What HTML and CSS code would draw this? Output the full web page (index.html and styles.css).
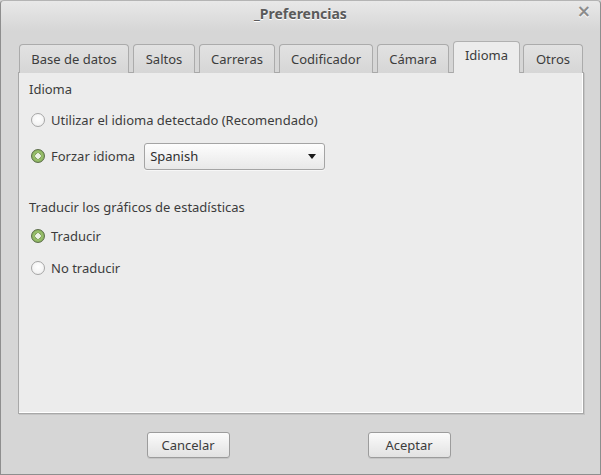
FILE: index.html
```html
<!DOCTYPE html>
<html>
<head>
<meta charset="utf-8">
<link rel="stylesheet" href="styles.css">
</head>
<body>
<div class="window">
  <div class="titlebar">
    <span class="title">_Preferencias</span>
    <span class="close">&#x00D7;</span>
  </div>
  <div class="body">
    <div class="tabs">
      <div class="tab t-base">Base de datos</div>
      <div class="tab t-saltos">Saltos</div>
      <div class="tab t-carreras">Carreras</div>
      <div class="tab t-cod">Codificador</div>
      <div class="tab t-cam">Cámara</div>
      <div class="tab t-idioma active">Idioma</div>
      <div class="tab t-otros">Otros</div>
    </div>
    <div class="panel">
      <div class="section-label">Idioma</div>
      <div class="row r1"><span class="radio"></span><span>Utilizar el idioma detectado (Recomendado)</span></div>
      <div class="row r2"><span class="radio checked"></span><span>Forzar idioma</span>
        <div class="combo"><span>Spanish</span><span class="arrow"></span></div>
      </div>
      <div class="section-label s2">Traducir los gráficos de estadísticas</div>
      <div class="row r3"><span class="radio checked"></span><span>Traducir</span></div>
      <div class="row r4"><span class="radio"></span><span>No traducir</span></div>
    </div>
    <div class="buttons">
      <div class="button">Cancelar</div>
      <div class="button">Aceptar</div>
    </div>
  </div>
</div>
</body>
</html>
```
FILE: styles.css
```css
* { box-sizing: border-box; }
html, body { margin: 0; padding: 0; }
body {
  width: 601px; height: 475px; overflow: hidden;
  font-family: "Noto Sans", "DejaVu Sans", sans-serif;
  font-size: 13px;
  color: #3c3c3c;
  background: #d6d6d6;
}
.window {
  width: 601px; height: 475px;
  border: 1px solid #8e8e8e;
  border-top-color: #b4b4b4;
  border-radius: 4px 4px 0 0;
  background: #d6d6d6;
  display: flex; flex-direction: column;
}
.titlebar {
  height: 30px; flex: none;
  position: relative;
  display: flex; align-items: center; justify-content: center;
  background: linear-gradient(#e8e8e8, #d6d6d6);
  border-radius: 4px 4px 0 0;
}
.title {
  font-weight: bold; font-size: 14px; color: #5a5a5a;
  text-shadow: 0 1px 0 #ffffff;
  margin-top: -6px;
}
.close {
  position: absolute; right: 9px; top: 0px;
  font-family: "DejaVu Sans", sans-serif;
  font-size: 17px; font-weight: bold; color: #8c8c8c;
  text-shadow: 0 1px 0 #fff;
}
.body {
  flex: 1; display: flex; flex-direction: column;
  padding: 10px 16px 0 17px;
}
.tabs {
  display: flex; align-items: flex-end; gap: 4px;
  height: 32px; padding-left: 1px;
  position: relative; z-index: 1; margin-bottom: -1px;
}
.tab {
  flex: none; white-space: nowrap;
  height: 29px;
  display: flex; align-items: center; justify-content: center;
  background: linear-gradient(#e2e2e2, #d6d6d6);
  border: 1px solid #ababab;
  border-bottom: none;
  border-radius: 4px 4px 0 0;
  color: #3c3c3c;
}
.t-base { width: 110px; }
.t-saltos { width: 62px; }
.t-carreras { width: 76px; }
.t-cod { width: 94px; }
.t-cam { width: 72px; }
.t-idioma { width: 67px; }
.t-otros { width: 60px; margin-left: -1px; }
.tab.active {
  height: 32px;
  background: #ececec;
  border-color: #b0b0b0;
  padding-bottom: 5px;
}
.panel {
  height: 342px;
  background: #ececec;
  border: 1px solid #a8a8a8;
  box-shadow: inset -1px -1px 0 #ffffff, 1px 1px 0 #c4c4c4;
  padding: 7px 10px;
  display: flex; flex-direction: column;
}
.section-label { height: 18px; line-height: 18px; }
.section-label.s2 { margin-top: 29px; }
.row {
  display: flex; align-items: center; height: 26px; padding-left: 2px;
}
.r1 { margin-top: 9px; }
.r2 { margin-top: 10px; }
.r3 { margin-top: 7px; }
.r4 { margin-top: 6px; }
.radio {
  width: 14px; height: 14px; border-radius: 50%;
  border: 1px solid #a6a6a6;
  background: radial-gradient(circle at 50% 40%, #ffffff 0%, #f4f4f4 60%, #e6e6e6 100%);
  margin-right: 6px; flex: none;
}
.radio.checked {
  border-color: #5c6e48;
  background: radial-gradient(circle, #eef3e6 0 2.5px, #6f8f4a 3px, #9cc26e 3.8px, #8fb763 5.5px, #7a9c56 6.5px);
}
.combo {
  margin-left: 9px;
  width: 181px; height: 27px;
  border: 1px solid #a4a4a4;
  border-radius: 3px;
  background: linear-gradient(#fdfdfd, #e8e8e8);
  box-shadow: 0 1px 0 rgba(255,255,255,0.6);
  display: flex; align-items: center; justify-content: space-between;
  padding: 0 8px 0 5px;
  color: #2e2e2e;
}
.arrow {
  width: 0; height: 0;
  border-left: 4.5px solid transparent;
  border-right: 4.5px solid transparent;
  border-top: 5px solid #1a1a1a;
}
.buttons {
  flex: 1;
  display: flex; justify-content: center; align-items: flex-start;
  gap: 138px; padding-top: 18px; padding-right: 5px;
}
.button {
  width: 83px; height: 26px;
  border: 1px solid #9c9c9c;
  border-radius: 3px;
  background: linear-gradient(#fbfbfb, #e2e2e2);
  box-shadow: 0 1px 0 rgba(0,0,0,0.08);
  display: flex; align-items: center; justify-content: center;
  color: #3c3c3c;
}
```
